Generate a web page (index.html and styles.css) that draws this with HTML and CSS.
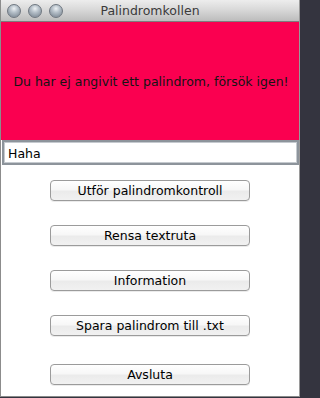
FILE: index.html
```html
<!DOCTYPE html>
<html lang="sv">
<head>
<meta charset="utf-8">
<title>Palindromkollen</title>
<link rel="stylesheet" href="styles.css">
</head>
<body>
<div class="window">
  <div class="titlebar">
    <div class="lights">
      <span class="light"></span>
      <span class="light"></span>
      <span class="light"></span>
    </div>
    <div class="title">Palindromkollen</div>
  </div>
  <div class="alert">Du har ej angivit ett palindrom, försök igen!</div>
  <div class="fieldrow">
    <div class="field">Haha</div>
  </div>
  <div class="buttons">
    <button class="btn">Utför palindromkontroll</button>
    <button class="btn">Rensa textruta</button>
    <button class="btn">Information</button>
    <button class="btn">Spara palindrom till .txt</button>
    <button class="btn btn-last">Avsluta</button>
  </div>
</div>
</body>
</html>
```

FILE: styles.css
```css
html, body {
  margin: 0;
  padding: 0;
}
html {
  background: #34343f;
}
body {
  width: 301px;
  height: 398px;
  background: #34343f;
  overflow: hidden;
  font-family: "DejaVu Sans", "Liberation Sans", sans-serif;
}
.window {
  width: 300px;
  height: 397px;
  background: #ffffff;
  border-left: 1px solid #8c8c8c;
  border-right: 1px solid #9a9a9a;
  border-bottom: 1px solid #8a8a8a;
  display: flex;
  flex-direction: column;
  box-sizing: border-box;
}
.titlebar {
  height: 21px;
  border-bottom: 1px solid #7d7d7d;
  background: linear-gradient(#ededed, #d9d9d9 45%, #bcbcbc);
  display: flex;
  align-items: center;
  flex-shrink: 0;
}
.lights {
  display: flex;
  gap: 7px;
  padding-left: 6px;
}
.light {
  width: 14px;
  height: 14px;
  border-radius: 50%;
  box-sizing: border-box;
  border: 1px solid #6f7780;
  background: radial-gradient(circle at 50% 30%, #eef2f5 0, #b9c3cc 35%, #8d98a3 75%, #aab4be 100%);
}
.title {
  flex: 1;
  text-align: center;
  font-size: 12.5px;
  color: #3a3a3a;
  margin-right: 62px;
}
.alert {
  height: 118px;
  flex-shrink: 0;
  background: #fa0050;
  display: flex;
  align-items: center;
  justify-content: center;
  font-size: 12.5px;
  color: #141414;
  padding-left: 2px;
}
.fieldrow {
  padding: 0 0 0 1px;
  flex-shrink: 0;
}
.field {
  height: 25px;
  box-sizing: border-box;
  border: 2px solid #8d949b;
  box-shadow: inset 0 0 0 1px #c5cacf;
  background: #fff;
  font-size: 12.5px;
  color: #000;
  padding: 4px 0 0 4px;
}
.buttons {
  display: flex;
  flex-direction: column;
  align-items: flex-start;
  gap: 24px;
  padding: 15px 0 0 49px;
}
.btn {
  width: 200px;
  height: 21px;
  margin: 0;
  padding: 0;
  box-sizing: border-box;
  border: 1px solid #9b9b9b;
  border-radius: 4px;
  background: linear-gradient(#ffffff, #f7f7f7 45%, #ebebeb 55%, #f1f1f1);
  box-shadow: 0 1px 0 rgba(0, 0, 0, 0.08);
  font-family: "DejaVu Sans", "Liberation Sans", sans-serif;
  font-size: 12.5px;
  color: #000;
  line-height: 18px;
}
.btn-last {
  margin-top: 4px;
}
```
